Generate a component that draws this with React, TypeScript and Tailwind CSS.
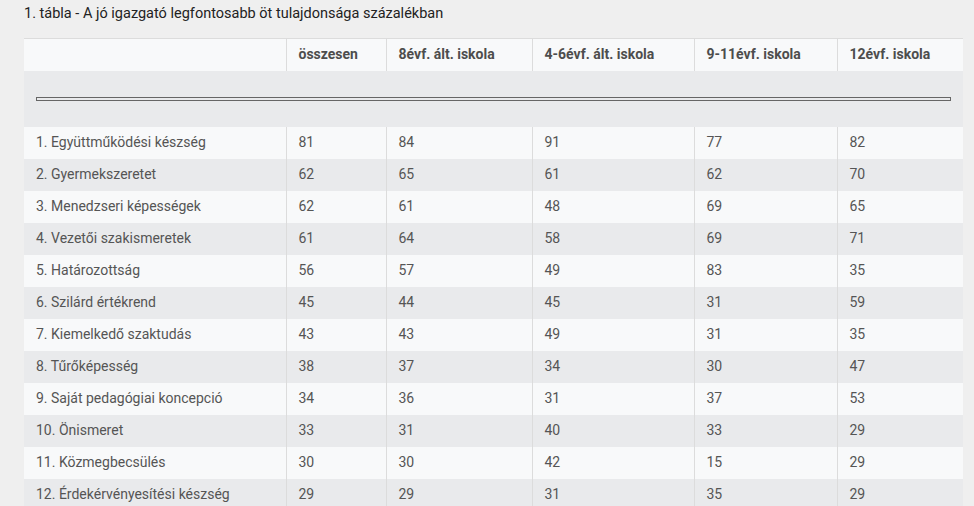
import React from "react";

const headers = ["összesen", "8évf. ált. iskola", "4-6évf. ált. iskola", "9-11évf. iskola", "12évf. iskola"];
const rows: [string, number[]][] = [
  ["1. Együttműködési készség", [81, 84, 91, 77, 82]],
  ["2. Gyermekszeretet", [62, 65, 61, 62, 70]],
  ["3. Menedzseri képességek", [62, 61, 48, 69, 65]],
  ["4. Vezetői szakismeretek", [61, 64, 58, 69, 71]],
  ["5. Határozottság", [56, 57, 49, 83, 35]],
  ["6. Szilárd értékrend", [45, 44, 45, 31, 59]],
  ["7. Kiemelkedő szaktudás", [43, 43, 49, 31, 35]],
  ["8. Tűrőképesség", [38, 37, 34, 30, 47]],
  ["9. Saját pedagógiai koncepció", [34, 36, 31, 37, 53]],
  ["10. Önismeret", [33, 31, 40, 33, 29]],
  ["11. Közmegbecsülés", [30, 30, 42, 15, 29]],
  ["12. Érdekérvényesítési készség", [29, 29, 31, 35, 29]],
];
const widths = ["w-[262px]", "w-[100px]", "w-[146px]", "w-[162px]", "w-[143px]", "w-[126px]"];

export default function App() {
  return (
    <div className="w-[974px] h-[506px] overflow-hidden bg-[#efefef] font-['Roboto',sans-serif] text-[14px]">
      <div className="px-6 pt-[5px] h-[38px] text-[#222] text-[14.5px] leading-[18px]">
        1. tábla - A jó igazgató legfontosabb öt tulajdonsága százalékban
      </div>
      <table className="ml-6 w-[939px] border-collapse table-fixed border-t border-[#dcdcdc] text-[#555]">
        <colgroup>
          {widths.map((w, i) => (
            <col key={i} className={w} />
          ))}
        </colgroup>
        <thead>
          <tr className="bg-[#f8f9fa] h-[32px]">
            <th className="text-left font-bold px-3"></th>
            {headers.map((h) => (
              <th key={h} className="text-left font-bold px-3 border-l border-[#dcdcdc] text-[#4d4d4d]">
                {h}
              </th>
            ))}
          </tr>
        </thead>
        <tbody>
          <tr className="bg-[#e9eaec] h-[56px]">
            <td colSpan={6} className="px-3">
              <div className="h-[4px] border border-[#666] bg-[#e9eaec]" />
            </td>
          </tr>
          {rows.map(([label, vals], i) => (
            <tr key={label} className={`h-[32px] ${i % 2 === 0 ? "bg-[#f8f9fa]" : "bg-[#e9eaec]"}`}>
              <td className="px-3">{label}</td>
              {vals.map((v, j) => (
                <td key={j} className="px-3 border-l border-[#dcdcdc]">
                  {v}
                </td>
              ))}
            </tr>
          ))}
        </tbody>
      </table>
    </div>
  );
}
